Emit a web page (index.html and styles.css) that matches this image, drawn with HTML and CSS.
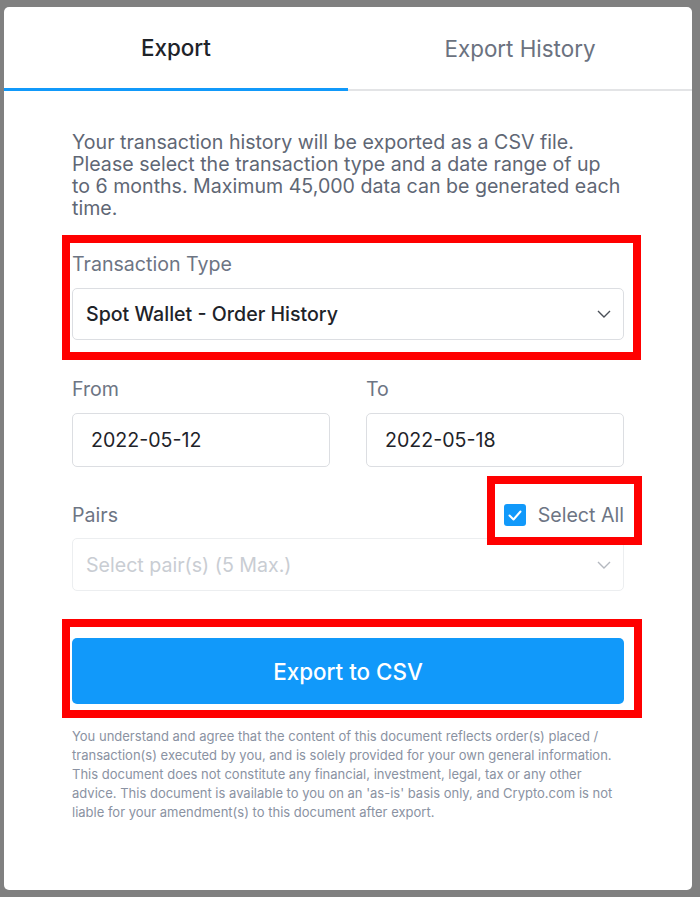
FILE: index.html
```html
<!DOCTYPE html>
<html lang="en">
<head>
<meta charset="UTF-8">
<meta name="viewport" content="width=device-width, initial-scale=1.0">
<title>Export</title>
<link rel="stylesheet" href="styles.css">
</head>
<body>
<div class="modal">
  <div class="tabs">
    <div class="tab active">Export</div>
    <div class="tab">Export History</div>
  </div>

  <div class="content">
    <p class="intro">Your transaction history will be exported as a CSV file. Please select the transaction type and a date range of up to 6 months. Maximum 45,000 data can be generated each time.</p>

    <div class="field type-field">
      <label class="label">Transaction Type</label>
      <div class="select">
        <span class="value">Spot Wallet - Order History</span>
        <svg class="chevron" width="14" height="8" viewBox="0 0 14 8"><path d="M1 1l6 6 6-6" fill="none" stroke="#4a4f57" stroke-width="1.4"/></svg>
      </div>
    </div>

    <div class="dates">
      <div class="field">
        <label class="label">From</label>
        <div class="input">2022-05-12</div>
      </div>
      <div class="field">
        <label class="label">To</label>
        <div class="input">2022-05-18</div>
      </div>
    </div>

    <div class="field pairs-field">
      <div class="pairs-head">
        <label class="label">Pairs</label>
        <div class="check">
          <span class="box">
            <svg width="14" height="11" viewBox="0 0 14 11"><path d="M1.5 5.5l4 4 7-8" fill="none" stroke="#fff" stroke-width="2" stroke-linecap="round" stroke-linejoin="round"/></svg>
          </span>
          <span class="check-text">Select All</span>
        </div>
      </div>
      <div class="select disabled">
        <span class="value">Select pair(s) (5 Max.)</span>
        <svg class="chevron" width="14" height="8" viewBox="0 0 14 8"><path d="M1 1l6 6 6-6" fill="none" stroke="#b4b8bf" stroke-width="1.4"/></svg>
      </div>
    </div>

    <button class="export-btn">Export to CSV</button>

    <p class="disclaimer">You understand and agree that the content of this document reflects order(s) placed / transaction(s) executed by you, and is solely provided for your own general information. This document does not constitute any financial, investment, legal, tax or any other advice. This document is available to you on an 'as-is' basis only, and Crypto.com is not liable for your amendment(s) to this document after export.</p>
  </div>

  <!-- annotation boxes -->
  <div class="mark mark-type"></div>
  <div class="mark mark-all"></div>
  <div class="mark mark-btn"></div>
</div>
</body>
</html>
```

FILE: styles.css
```css
body {
  margin: 0;
  padding: 0;
  background: #808080;
  font-family: Inter, "Noto Sans", sans-serif;
}
.modal {
  position: relative;
  width: 688px;
  height: 883px;
  margin: 7px 0 0 4px;
  background: #fff;
  border-radius: 5px;
  overflow: hidden;
}
.tabs {
  display: flex;
  border-bottom: 2px solid #e3e4e6;
}
.tab {
  flex: 1;
  height: 82px;
  display: flex;
  align-items: center;
  justify-content: center;
  font-size: 22.4px;
  color: #6b7280;
  margin-bottom: -2px;
  border-bottom: 2px solid transparent;
}
.tab.active {
  color: #1e2329;
  font-weight: 500;
  border-bottom: 3px solid #1199fa;
  height: 81px;
}
.content {
  padding: 40px 68px 0;
}
.intro {
  margin: 0;
  max-width: 550px;
  font-size: 19.6px;
  line-height: 22px;
  color: #5f6775;
}
.label {
  display: block;
  font-size: 19.6px;
  line-height: 22px;
  color: #6d7584;
}
.field .label {
  margin-bottom: 13px;
}
.type-field {
  margin-top: 34px;
}
.select, .input {
  box-sizing: border-box;
  height: 52px;
  border: 1.5px solid #dcdee2;
  border-radius: 5px;
  display: flex;
  align-items: center;
  padding: 0 12px 0 13px;
  font-size: 19.6px;
  color: #1e2329;
}
.select .value {
  flex: 1;
  font-weight: 500;
}
.dates {
  display: grid;
  grid-template-columns: 1fr 1fr;
  gap: 36px;
  margin-top: 38px;
}
.input {
  height: 54px;
  padding-left: 18px;
}
.pairs-field {
  margin-top: 36px;
}
.pairs-head {
  display: flex;
  justify-content: space-between;
  align-items: center;
  margin-bottom: 11px;
}
.pairs-head .label {
  margin: 0;
}
.check {
  display: flex;
  align-items: center;
  gap: 12px;
}
.box {
  width: 22px;
  height: 22px;
  border-radius: 3px;
  background: #1199fa;
  display: flex;
  align-items: center;
  justify-content: center;
}
.check-text {
  font-size: 19.6px;
  color: #6d7584;
}
.select.disabled {
  border-color: #eceef0;
  height: 53px;
}
.select.disabled .value {
  color: #c9cdd3;
  font-weight: 400;
}
.export-btn {
  display: block;
  width: 100%;
  height: 66px;
  margin-top: 47px;
  border: none;
  border-radius: 5px;
  background: #1199fa;
  color: #fff;
  font-family: inherit;
  font-size: 22.4px;
  font-weight: 500;
}
.disclaimer {
  margin: 23px 0 0;
  font-size: 13px;
  line-height: 19px;
  color: #8a92a2;
}
.mark {
  position: absolute;
  border: 8px solid #ff0000;
}
.mark-type {
  left: 58px;
  top: 228px;
  width: 563px;
  height: 109px;
}
.mark-all {
  left: 483px;
  top: 469px;
  width: 139px;
  height: 53px;
}
.mark-btn {
  left: 58px;
  top: 612px;
  width: 564px;
  height: 83px;
}
```
